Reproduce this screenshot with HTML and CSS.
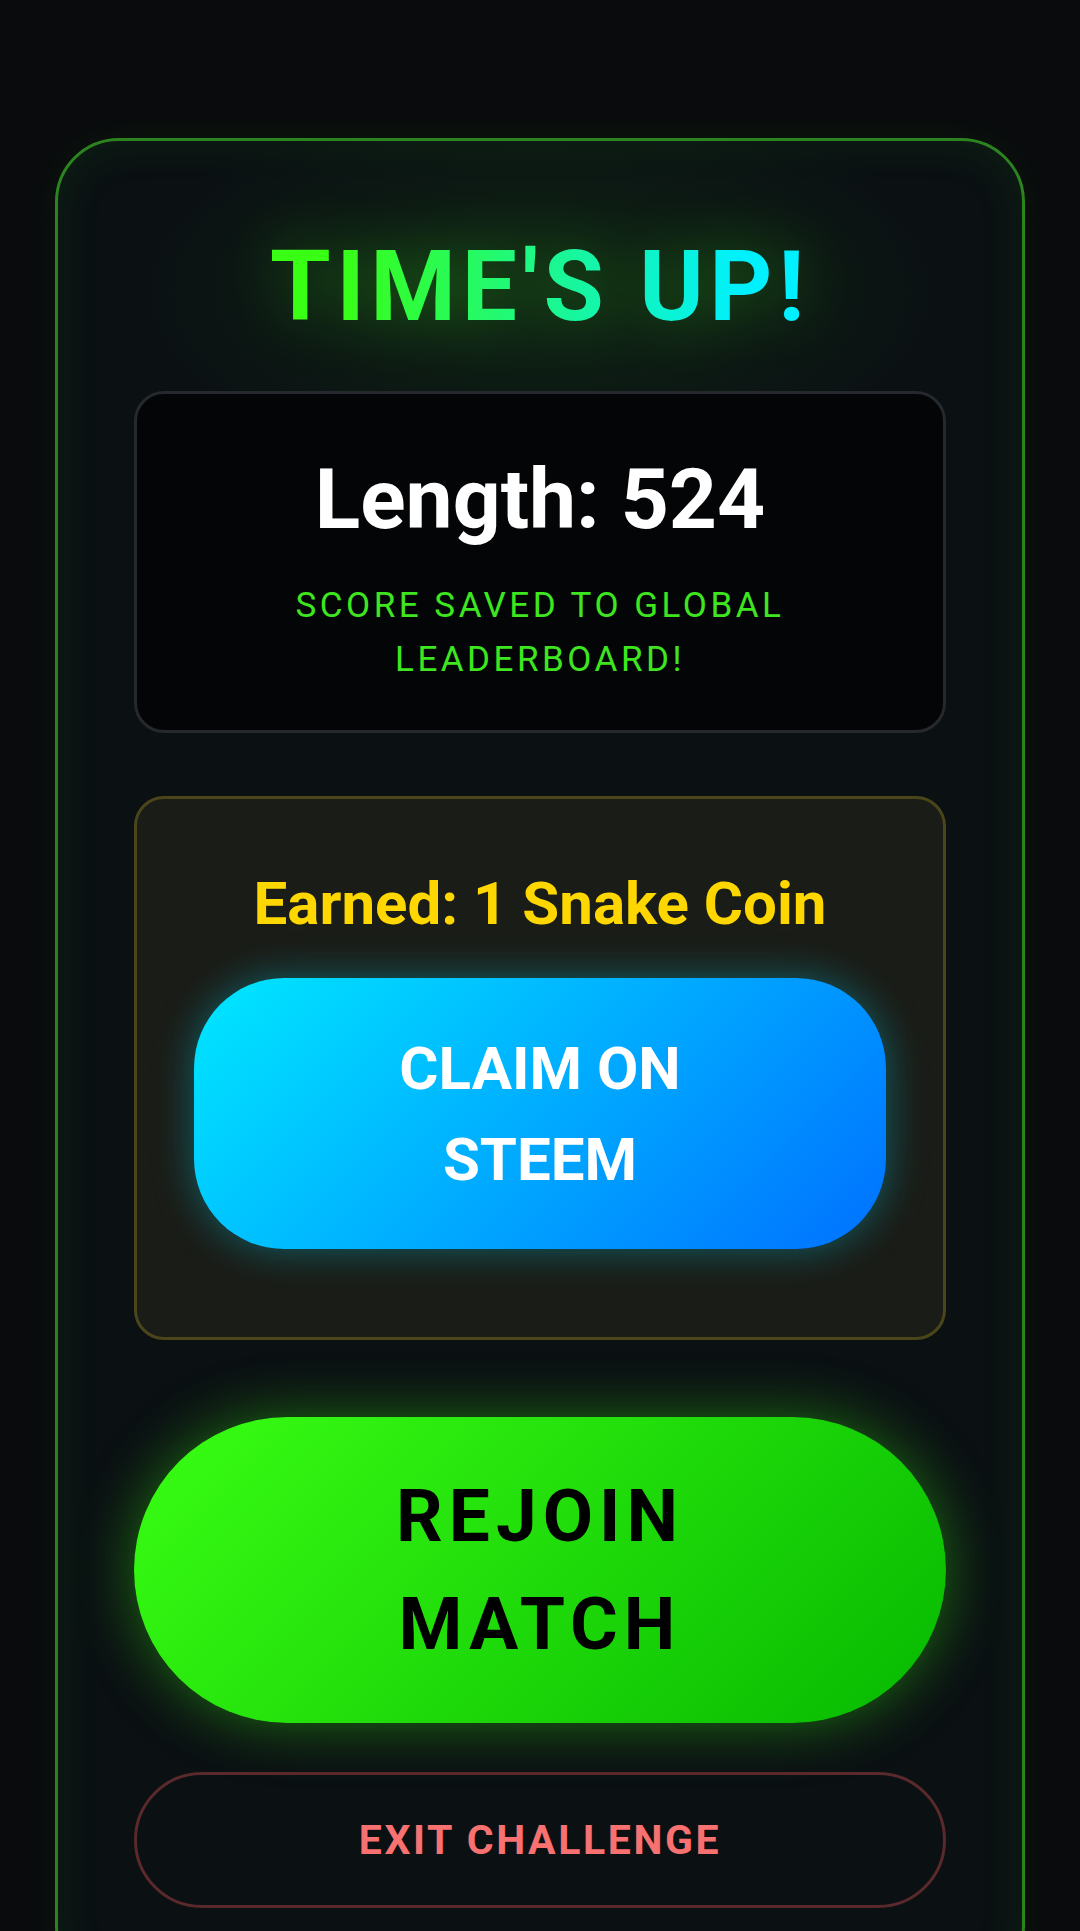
FILE: index.html
```html
<!DOCTYPE html>
<html lang="en">
<head>
  <meta charset="UTF-8" />
  <meta name="viewport" content="width=device-width, initial-scale=1.0"/>
  <title>Time's Up</title>
  <link rel="stylesheet" href="styles.css">
</head>
<body>
  <div class="screen">
    <div class="panel">
      <h1 class="title">TIME'S UP!</h1>

      <div class="score-box">
        <div class="score">Length: 524</div>
        <p class="saved">SCORE SAVED TO GLOBAL LEADERBOARD!</p>
      </div>

      <div class="reward-box">
        <div class="earned">Earned: 1 Snake Coin</div>
        <button class="claim">CLAIM ON STEEM</button>
      </div>

      <button class="rejoin">REJOIN MATCH</button>
      <button class="exit">EXIT CHALLENGE</button>
    </div>
  </div>
</body>
</html>
```

FILE: styles.css
```css
body {
  margin: 0;
  background: #0a0b0d;
  font-family: Roboto, "Liberation Sans", sans-serif;
  color: #fff;
}
.screen {
  padding: 138px 55px 0;
}
.panel {
  border: 3px solid #2b8420;
  border-radius: 64px;
  padding: 88px 76px 80px;
  background: radial-gradient(ellipse 420px 200px at 50% 150px, rgba(40, 160, 30, 0.14), transparent),
    #0b1013;
  box-shadow: inset 0 0 50px rgba(57, 255, 20, 0.07), 0 0 40px rgba(57, 255, 20, 0.05);
  display: flex;
  flex-direction: column;
}
.title {
  margin: 0 0 47px;
  font-size: 98px;
  line-height: 115px;
  font-weight: 700;
  letter-spacing: 5.5px;
  text-align: center;
  background: linear-gradient(90deg, #39ff14 25%, #00f0ff 75%);
  -webkit-background-clip: text;
  background-clip: text;
  color: transparent;
  filter: drop-shadow(0 0 30px rgba(57, 255, 20, 0.35));
}
.score-box {
  border: 3px solid #25282c;
  border-radius: 30px;
  background: #030507;
  padding: 57px 40px 43px;
  text-align: center;
}
.score {
  font-size: 84px;
  line-height: 98px;
  font-weight: 700;
}
.saved {
  margin: 30px 0 0;
  font-size: 35px;
  line-height: 54px;
  letter-spacing: 3.5px;
  color: #3ee61f;
}
.reward-box {
  margin-top: 63px;
  border: 3px solid #4a4619;
  border-radius: 30px;
  background: #1a1c17;
  padding: 70px 57px 88px;
  text-align: center;
  display: flex;
  flex-direction: column;
}
.earned {
  font-size: 60px;
  line-height: 70px;
  font-weight: 700;
  color: #ffd700;
}
button {
  font-family: Roboto, "Liberation Sans", sans-serif;
  font-weight: 700;
  cursor: pointer;
}
.claim {
  margin-top: 39px;
  height: 271px;
  padding: 0 150px;
  border: none;
  border-radius: 90px;
  background: linear-gradient(135deg, #00e8ff, #0070ff);
  color: #fff;
  font-size: 60px;
  line-height: 91px;
  box-shadow: 0 0 40px rgba(0, 229, 255, 0.35);
}
.rejoin {
  margin-top: 77px;
  height: 306px;
  padding: 0 220px;
  border: none;
  border-radius: 153px;
  background: linear-gradient(135deg, #3aff14, #06b800);
  color: #000;
  font-size: 73px;
  line-height: 108px;
  letter-spacing: 6px;
  box-shadow: 0 0 60px rgba(57, 255, 20, 0.4);
}
.exit {
  margin-top: 49px;
  height: 136px;
  border: 3px solid #5a292b;
  border-radius: 68px;
  background: transparent;
  color: #f87171;
  font-size: 41px;
  letter-spacing: 2.6px;
}
```
